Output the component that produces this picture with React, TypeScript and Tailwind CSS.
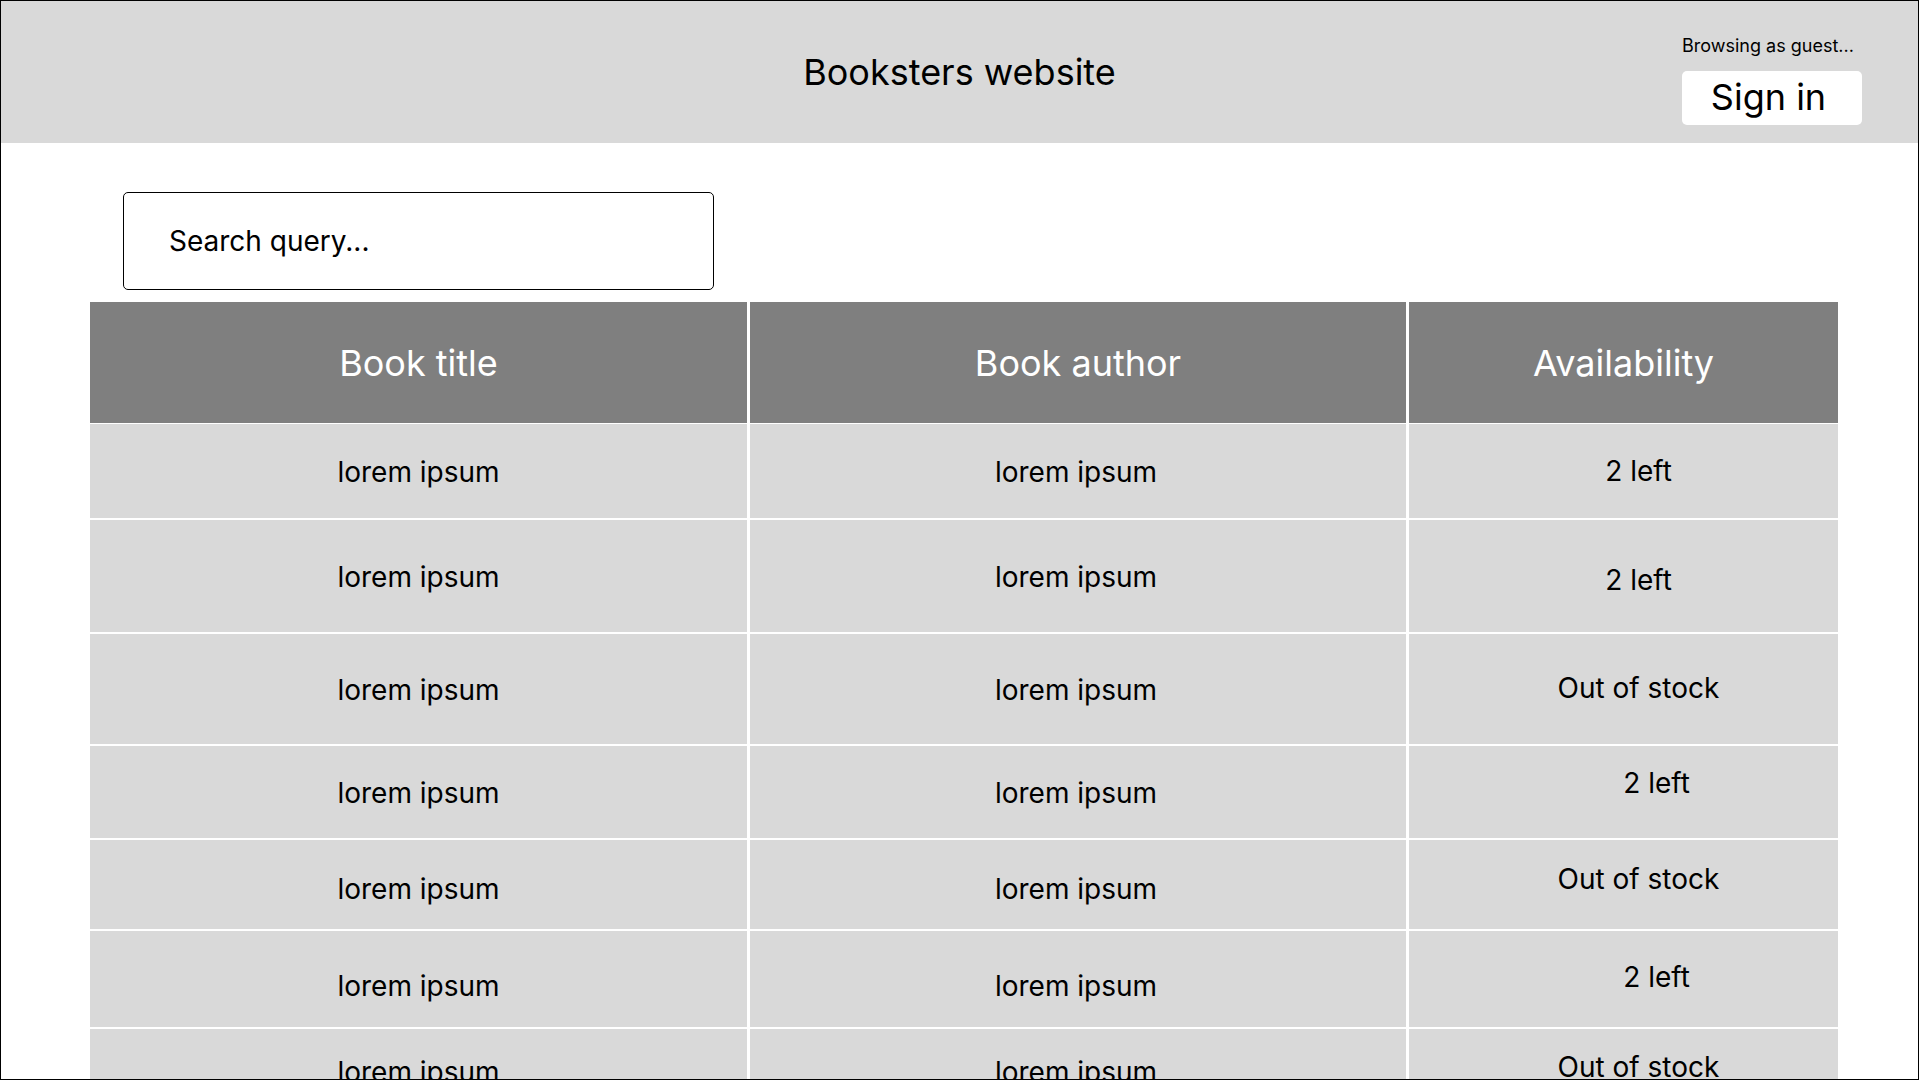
import React from "react";

type Row = {
  h: string;
  lorem: string;
  avail: string;
  availPad: string;
};

const rows: Row[] = [
  { h: "h-[94px]", lorem: "pt-[2px]", avail: "2 left", availPad: "pl-[30px] pb-[1px]" },
  { h: "h-[112px]", lorem: "pt-[2px]", avail: "2 left", availPad: "pl-[30px] pt-[7px]" },
  { h: "h-[110px]", lorem: "pt-[2px]", avail: "Out of stock", availPad: "pl-[30px] pb-[3px]" },
  { h: "h-[92px]", lorem: "pt-[2px]", avail: "2 left", availPad: "pl-[66px] pb-[18px]" },
  { h: "h-[89px]", lorem: "pt-[8px]", avail: "Out of stock", availPad: "pl-[30px] pb-[12px]" },
  { h: "h-[96px]", lorem: "pt-[14px]", avail: "2 left", availPad: "pl-[66px] pb-[5px]" },
  { h: "h-[84px]", lorem: "pt-[2px]", avail: "Out of stock", availPad: "pl-[30px] pb-[9px]" },
];

export default function App() {
  return (
    <div className="w-[1919px] h-[1080px] overflow-hidden border border-black bg-white text-black font-['Inter',sans-serif]">
      <header className="h-[142px] bg-[#d9d9d9] grid grid-cols-[1fr_auto_1fr]">
        <div />
        <div className="flex items-center text-[36px] leading-none pb-[1px]">Booksters website</div>
        <div className="justify-self-end pr-[56px] pt-[34px] flex flex-col items-start">
          <span className="text-[18px] leading-[22px]">Browsing as guest...</span>
          <button className="mt-[14px] w-[180px] h-[54px] bg-white rounded-[5px] flex items-center justify-center text-[36px] leading-none pb-[3px] pr-[7px]">
            Sign in
          </button>
        </div>
      </header>

      <main className="pt-[49px] pl-[89px]">
        <div className="ml-[33px] w-[591px] h-[98px] border border-black rounded-[5px] flex items-center pl-[45px] text-[28px] leading-none">
          Search query...
        </div>

        <div className="mt-[12px] w-[1748px] flex flex-col">
          <div className="h-[121px] grid grid-cols-[657px_656px_429px] gap-x-[3px] mb-[1px]">
            {["Book title", "Book author", "Availability"].map((t) => (
              <div key={t} className="bg-[#7f7f7f] text-white flex items-center justify-center text-[36px] leading-none">
                {t}
              </div>
            ))}
          </div>
          <div className="flex flex-col gap-[2px]">
            {rows.map((r, i) => (
              <div key={i} className={`${r.h} shrink-0 grid grid-cols-[657px_656px_429px] gap-x-[3px]`}>
                <div className={`bg-[#d9d9d9] flex items-center justify-center text-[28px] leading-none ${r.lorem}`}>
                  lorem ipsum
                </div>
                <div className={`bg-[#d9d9d9] flex items-center justify-center text-[28px] leading-none pr-[4px] ${r.lorem}`}>
                  lorem ipsum
                </div>
                <div className={`bg-[#d9d9d9] flex items-center justify-center text-[28px] leading-none ${r.availPad}`}>
                  {r.avail}
                </div>
              </div>
            ))}
          </div>
        </div>
      </main>
    </div>
  );
}
